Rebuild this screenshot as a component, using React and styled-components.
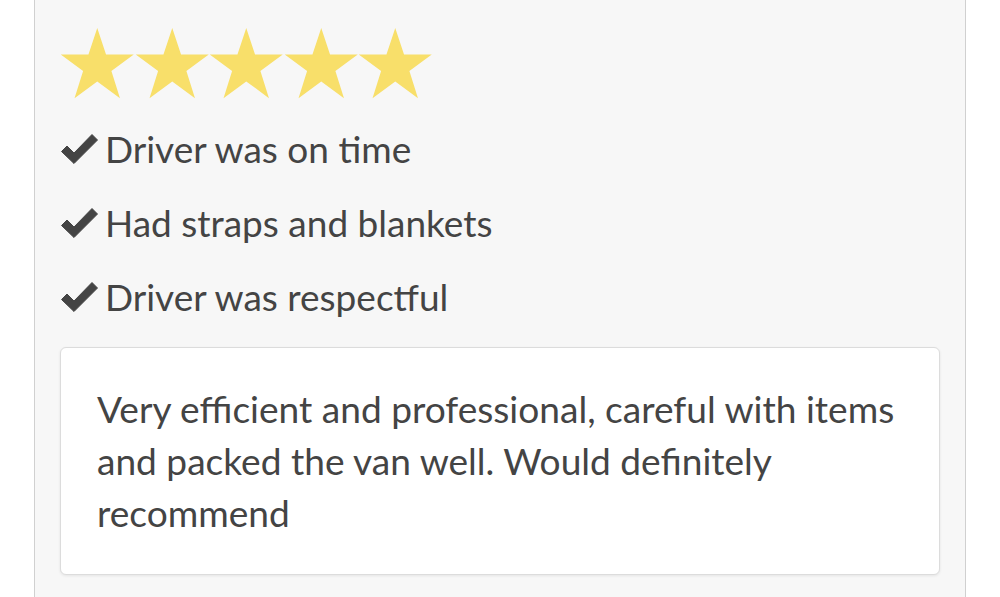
import React from "react";
import styled, { createGlobalStyle } from "styled-components";

const GlobalStyle = createGlobalStyle`
  body {
    margin: 0;
    background-color: #ffffff;
    font-family: Lato, "Open Sans", sans-serif;
  }
`;

const Page = styled.div`
  padding: 0 34px;
  height: 597px;
  overflow: hidden;
`;

const Card = styled.div`
  background-color: #f7f7f7;
  border-left: 1px solid #d0d0d0;
  border-right: 1px solid #d0d0d0;
  padding: 28px 25px 40px 25px;
  min-height: 640px;
`;

const Stars = styled.div`
  display: flex;
  height: 71px;
`;

const Star = styled.svg`
  width: 74.5px;
  height: 71px;
  fill: #f8df6a;
`;

const CheckList = styled.ul`
  list-style: none;
  margin: 12px 0 0 0;
  padding: 0;
`;

const CheckItem = styled.li`
  display: flex;
  align-items: center;
  height: 74px;
  color: #444444;
  font-size: 37px;
`;

const CheckIcon = styled.svg`
  width: 37px;
  height: 31px;
  margin: 0 7px 0 1px;
  flex-shrink: 0;
  fill: #444444;
`;

const Comment = styled.div`
  margin-top: 14px;
  background-color: #ffffff;
  border: 1px solid #dcdcdc;
  border-radius: 6px;
  box-shadow: 0 1px 3px rgba(0, 0, 0, 0.08);
  padding: 35px 28px 35px 36px;
  color: #444444;
  font-size: 37.1px;
  line-height: 52px;
`;

const items = [
  "Driver was on time",
  "Had straps and blankets",
  "Driver was respectful",
];

function StarIcon() {
  return (
    <Star viewBox="0 0 100 95">
      <polygon points="50,0 61.8,35.5 99,35.5 69,57.5 80.5,94 50,71.5 19.5,94 31,57.5 1,35.5 38.2,35.5" />
    </Star>
  );
}

function Check() {
  return (
    <CheckIcon viewBox="0 0 37 31">
      <polygon
        points="0.5,18.5 6,13 13,20 31,1.5 36.5,7 13,30.5"
        stroke="#444444"
        strokeWidth="1"
        strokeLinejoin="round"
      />
    </CheckIcon>
  );
}

function App() {
  return (
    <Page>
      <GlobalStyle />
      <Card>
        <Stars>
          {[0, 1, 2, 3, 4].map((i) => (
            <StarIcon key={i} />
          ))}
        </Stars>
        <CheckList>
          {items.map((text) => (
            <CheckItem key={text}>
              <Check />
              {text}
            </CheckItem>
          ))}
        </CheckList>
        <Comment>
          Very efficient and professional, careful with items and packed the
          van well. Would definitely recommend
        </Comment>
      </Card>
    </Page>
  );
}

export default App;
